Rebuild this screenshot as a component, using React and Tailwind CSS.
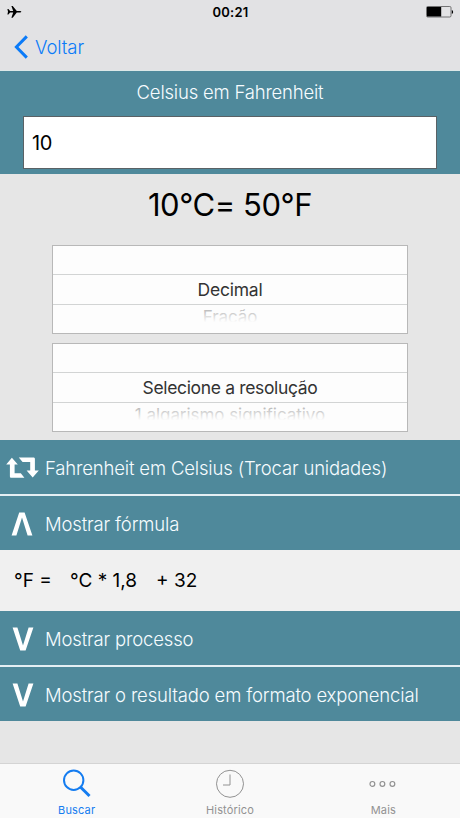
import React, { useState } from 'react';

const PlaneIcon = () => (
  <svg width="15" height="14" viewBox="0 0 15 14" className="block" fill="#000">
    <path d="M0.4 4h1l1.7 2h3.1L4.4 0.9h1.3L9.8 6h2.8c1 0 1.7 0.3 1.7 0.8s-0.7 0.8-1.7 0.8H9.8l-4.1 5.1H4.4l1.8-5.1H3.1L1.4 9.6h-1L1 6.8z" />
  </svg>
);

const BatteryIcon = () => (
  <svg width="28" height="12" viewBox="0 0 28 12" className="block">
    <rect x="0.5" y="0.5" width="24.5" height="10.5" rx="1.2" fill="none" stroke="#555" strokeWidth="0.8" />
    <rect x="1" y="1" width="14.2" height="9.5" fill="#000" />
    <path d="M25.8 4v3.8c0.8-0.2 1.3-1 1.3-1.9s-0.5-1.7-1.3-1.9z" fill="#000" />
  </svg>
);

const SwapIcon = () => (
  <svg width="33" height="22" viewBox="0 0 33 22" className="block" fill="#fff">
    <path d="M5.9 0.8 11.8 7.6H8.6v8.6h6.2l3.6 4.6H5.4c-1 0-1.5-0.5-1.5-1.5V7.6H0.2z" />
    <path d="M12.8 0.4h14.6c1 0 1.5 0.5 1.5 1.5v11.5h3.9l-6.1 7-6.1-7h3.6V5h-7.6z" />
  </svg>
);

const ArrowUp = () => (
  <svg width="22" height="24" viewBox="0 0 22 24" className="mr-[2px] block" fill="#fff">
    <path d="M8.2 0.4h5.4L21.4 23.4h-4.8L11 5.6 5.4 23.4H0.6z" />
  </svg>
);

const ArrowDown = () => (
  <svg width="22" height="24" viewBox="0 0 22 24" className="ml-[1px] block" fill="#fff">
    <path d="M8.2 23.6h5.4L21.4 0.6h-4.8L11 18.4 5.4 0.6H0.6z" />
  </svg>
);

const Picker = ({ selected, next, selectedClass, nextClass }) => (
  <div className="ml-[52px] flex h-[89px] w-[356px] flex-col border border-[#b8b8b8] bg-[#fdfdfd] text-center">
    <div className="h-7 shrink-0" />
    <div className="h-[31px] shrink-0 border-y border-[#d2d4d4]">
      <span className={`block text-[17.5px] leading-[29px] text-[#333] ${selectedClass}`}>{selected}</span>
    </div>
    <div className="relative h-7">
      <span className={`block text-[17px] leading-[24px] text-[#999] ${nextClass}`}>{next}</span>
      <div className="absolute inset-0 bg-linear-to-b from-[#fdfdfd]/10 to-[#fdfdfd] to-[62%]" />
    </div>
  </div>
);

const Row = ({ icon, label, onClick }) => (
  <button onClick={onClick} className="flex h-[54px] w-full shrink-0 items-center bg-[#4f899b] pt-px text-left text-[#f6fcff]">
    <span className="flex w-[45px] shrink-0 justify-center">{icon}</span>
    <span className="whitespace-nowrap text-[18.5px] font-[350] leading-6 tracking-[-0.16px]">{label}</span>
  </button>
);

function App() {
  const [value, setValue] = useState('10');
  const [showFormula, setShowFormula] = useState(true);

  const fahrenheit = Number(value) * 1.8 + 32;

  return (
    <div className="flex h-[818px] w-[460px] flex-col overflow-hidden bg-[#e6e6e6] font-['Inter','Liberation_Sans',sans-serif]">
      {/* Status bar */}
      <div className="grid h-6 shrink-0 grid-cols-3 items-center bg-[#e2e2e4] pl-[7px] pr-[6px]">
        <span className="pb-px"><PlaneIcon /></span>
        <span className="text-center text-[13px] font-semibold leading-6 tracking-[0.2px]">00:21</span>
        <span className="justify-self-end"><BatteryIcon /></span>
      </div>

      {/* Nav */}
      <div className="flex h-[47px] shrink-0 items-center border-b border-[#dce8e8] bg-[#e2e2e4] pl-[14px] text-[#0b7bf8]">
        <svg width="15" height="24" viewBox="0 0 15 24" className="block" fill="none" stroke="currentColor" strokeWidth="3">
          <path d="M12.8 1.4 2.4 12l10.4 10.6" />
        </svg>
        <span className="ml-[6px] text-[18.5px] font-[350] leading-6 tracking-[-0.1px]">Voltar</span>
      </div>

      {/* Input panel */}
      <div className="h-[103px] shrink-0 bg-[#4f899b] px-[23px]">
        <h1 className="pt-[9px] text-center text-[18.5px] font-[350] leading-6 tracking-[-0.2px] text-[#f6fcff]">Celsius em Fahrenheit</h1>
        <input
          value={value}
          onChange={(e) => setValue(e.target.value)}
          className="mt-3 block h-[53px] w-full border border-[#5a6165] bg-white pl-2 text-[20px] tracking-[-0.4px] text-black outline-none"
        />
      </div>

      <div className="h-[71px] shrink-0 pt-[11px] text-center text-[31px] leading-10 tracking-[-0.45px] text-black">
        {value}°C= {fahrenheit}°F
      </div>

      {/* Pickers */}
      <div className="flex h-[195px] shrink-0 flex-col gap-[9px]">
        <Picker selected="Decimal" next="Fração" selectedClass="tracking-[-0.2px]" nextClass="tracking-[-0.1px]" />
        <Picker selected="Selecione a resolução" next="1 algarismo significativo" selectedClass="tracking-[-0.35px]" nextClass="tracking-[-0.05px]" />
      </div>

      <div className="flex flex-col gap-[2px] bg-[#e4eff4]">
        <Row icon={<SwapIcon />} label="Fahrenheit em Celsius (Trocar unidades)" />
        <Row
          icon={showFormula ? <ArrowUp /> : <ArrowDown />}
          label="Mostrar fórmula"
          onClick={() => setShowFormula(!showFormula)}
        />
      </div>
      {showFormula && (
        <div className="flex h-[61px] shrink-0 items-center bg-[#f0f0f0] pl-[14px] pt-px text-[19px] text-black">
          <span className="w-[56px]">°F =</span>
          <span className="w-[86px]">°C * 1,8</span>
          <span>+ 32</span>
        </div>
      )}
      <div className="flex flex-col gap-[2px] bg-[#e4eff4]">
        <Row icon={<ArrowDown />} label="Mostrar processo" />
        <Row icon={<ArrowDown />} label="Mostrar o resultado em formato exponencial" />
      </div>

      {/* Tab bar */}
      <nav className="mt-auto grid h-[55px] shrink-0 grid-cols-3 border-t border-[#d4d4d4] bg-[#f9f9f9] text-center text-[11px] leading-[14px] text-[#929292]">
        <div className="flex flex-col items-center pt-1 text-[#147cf0]">
          <svg width="30" height="30" viewBox="0 0 30 30" className="block" fill="none" stroke="currentColor">
            <circle cx="11.7" cy="12.2" r="9.7" strokeWidth="2" />
            <path d="M18.7 19.2 27.5 28" strokeWidth="3" />
          </svg>
          <span className="mt-[5px] tracking-[0.15px]">Buscar</span>
        </div>
        <div className="flex flex-col items-center pt-1">
          <svg width="30" height="30" viewBox="0 0 30 30" className="block" fill="none" stroke="currentColor" strokeWidth="1">
            <circle cx="15" cy="15.8" r="13.5" />
            <path d="M15 6.5V17H8" />
          </svg>
          <span className="mt-[5px] tracking-[0.15px]">Histórico</span>
        </div>
        <div className="flex flex-col items-center pt-1">
          <svg width="30" height="30" viewBox="0 0 30 30" className="block" fill="none" stroke="currentColor" strokeWidth="1.2">
            <circle cx="4.4" cy="15.9" r="2.4" />
            <circle cx="14.4" cy="15.9" r="2.4" />
            <circle cx="24.4" cy="15.9" r="2.4" />
          </svg>
          <span className="mt-[5px] tracking-[0.15px]">Mais</span>
        </div>
      </nav>
    </div>
  );
}

export default App;
